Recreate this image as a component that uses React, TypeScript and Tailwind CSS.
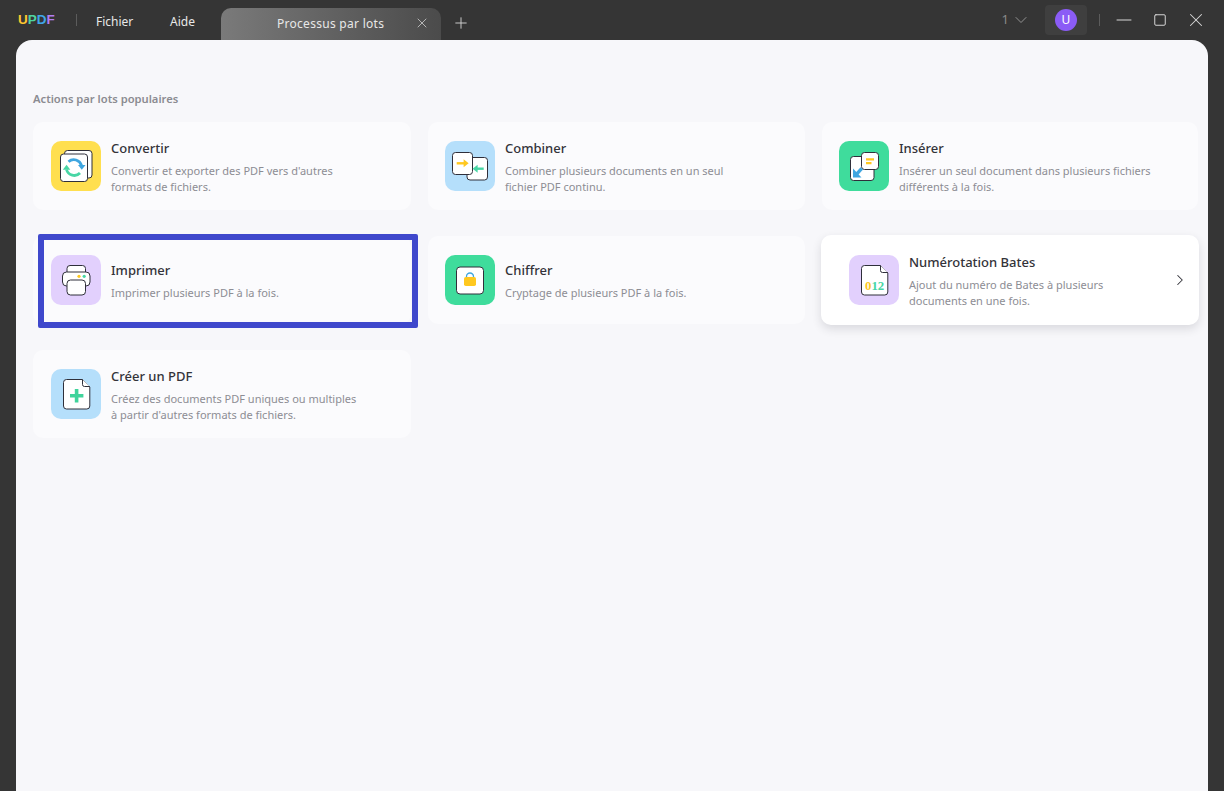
import { ChevronDown, ChevronRight, Minus, Plus, Square, X } from "lucide-react";
import type { ReactNode } from "react";

const ink = "#2f2f3a";

function Page({ x, y, w, h, fill = "#fff" }: { x: number; y: number; w: number; h: number; fill?: string }) {
  return <rect x={x} y={y} width={w} height={h} rx="3" fill={fill} stroke={ink} strokeWidth="1" />;
}

// page with the folded top right corner
function FoldedPage() {
  return (
    <>
      <path d="M15.5 10.5H31.5L38.8 18V37a3 3 0 0 1-3 3H15.5a3 3 0 0 1-3-3V13.5a3 3 0 0 1 3-3Z" fill="#fff" stroke={ink} />
      <path d="M31.5 10.5V15.5a2 2 0 0 0 2 2H38.8" fill="#fff" stroke={ink} />
    </>
  );
}

function IconBox({ bg, children }: { bg: string; children: ReactNode }) {
  return (
    <div className={`h-[50px] w-[50px] shrink-0 rounded-[10px] ${bg}`}>
      <svg width="50" height="50" viewBox="0 0 50 50" fill="none">{children}</svg>
    </div>
  );
}

const ConvertIcon = (
  <IconBox bg="bg-[#ffdf4f]">
    <Page x={13.5} y={9.5} w={27.5} h={27.5} />
    <Page x={9.5} y={13} w={27} h={27.5} />
    <path d="M30.5 24.5a8 8 0 0 0-13-3.8" stroke="#3fa6e0" strokeWidth="2.8" />
    <path d="M27 24h7.5l-3.7 4.8Z" fill="#3fa6e0" />
    <path d="M15.5 28.5a8 8 0 0 0 13.5 3.5" stroke="#48d6a5" strokeWidth="2.8" />
    <path d="M11.8 28.8h7.5l-3.7-5Z" fill="#48d6a5" />
  </IconBox>
);

const CombineIcon = (
  <IconBox bg="bg-[#b5dffb]">
    <Page x={22} y={16.5} w={20.5} h={22.5} />
    <Page x={7.5} y={11.5} w={20} h={22} />
    <path d="M11.7 22.3h8" stroke="#ffc81f" strokeWidth="2.4" />
    <path d="M18.6 18.3l5 4-5 4Z" fill="#ffc81f" />
    <path d="M31 27.7h7.7" stroke="#48d6a5" strokeWidth="2.4" />
    <path d="M32.6 23.7l-5 4 5 4Z" fill="#48d6a5" />
  </IconBox>
);

const InsertIcon = (
  <IconBox bg="bg-[#3fdc9c]">
    <Page x={11.5} y={15.5} w={23.5} h={24} />
    <Page x={22.5} y={11.5} w={17} h={17} />
    <path d="M27 18.3h8M27 22.2h5.5" stroke="#ffc81f" strokeWidth="2.2" />
    <path d="M22.8 27.3l-5.4 6" stroke="#3fa6e0" strokeWidth="3.4" />
    <path d="M14 27.5v9h8.5Z" fill="#3fa6e0" />
  </IconBox>
);

const PrintIcon = (
  <IconBox bg="bg-[#e2d0fd]">
    <Page x={16} y={10.5} w={18.5} h={10} />
    <rect x="11.5" y="17" width="27.5" height="14" rx="4" fill="#fff" stroke={ink} />
    <rect x="16" y="25" width="18.5" height="15" rx="3.5" fill="#fff" stroke={ink} />
    <circle cx="28" cy="21.3" r="1.6" fill="#ffc81f" />
    <circle cx="33.2" cy="21.3" r="1.6" fill="#48d6a5" />
  </IconBox>
);

const LockIcon = (
  <IconBox bg="bg-[#3fdc9c]">
    <rect x="11.5" y="12" width="27" height="27" rx="3.5" fill="#fff" stroke={ink} />
    <path d="M21.5 22.5v-1a3.5 3.5 0 0 1 7 0v1" stroke="#3fa6e0" strokeWidth="1.3" />
    <rect x="19" y="22" width="12" height="9" rx="1.8" fill="#ffc81f" />
  </IconBox>
);

const BatesIcon = (
  <IconBox bg="bg-[#e2d0fd]">
    <FoldedPage />
    <text x="16" y="35" fontFamily="'Liberation Serif', serif" fontWeight="700" fontSize="12.8">
      <tspan fill="#ffc81f">0</tspan>
      <tspan fill="#48d6a5">12</tspan>
    </text>
  </IconBox>
);

const CreateIcon = (
  <IconBox bg="bg-[#b5dffb]">
    <FoldedPage />
    <path d="M25.6 20v13.4M19 26.7h13.4" stroke="#3fd39b" strokeWidth="3.6" />
  </IconBox>
);

function CardText({ title, desc }: { title: string; desc: ReactNode }) {
  return (
    <div>
      <div className="text-[13px] font-medium leading-[20px] text-[#333339]">{title}</div>
      <div className="mt-[5px] text-[11px] leading-[16px] text-[#8d8d94]">{desc}</div>
    </div>
  );
}

function Card({ icon, title, desc, pad = "pl-[18px]" }: { icon: ReactNode; title: string; desc: ReactNode; pad?: string }) {
  return (
    <div className={`flex h-[88px] items-center gap-[10px] rounded-[10px] bg-[#fbfbfd] ${pad}`}>
      {icon}
      <CardText title={title} desc={desc} />
    </div>
  );
}

export default function App() {
  return (
    <div className="flex h-screen flex-col overflow-hidden bg-[#353535] font-['Noto_Sans',sans-serif]">
      {/* title bar */}
      <div className="flex h-[40px] shrink-0 items-center text-[12px] text-[#e8e8e8]">
        <div className="ml-[18px] w-[38px] pb-[1px] font-['Liberation_Sans',sans-serif] text-[13.5px] font-bold leading-none">
          <span className="text-[#fdc72f]">U</span>
          <span className="text-[#4fd3a0]">P</span>
          <span className="text-[#3fa6e8]">D</span>
          <span className="text-[#b27df2]">F</span>
        </div>
        <div className="ml-[20px] mt-[-1px] h-[12px] w-px bg-[#5c5c5c]" />
        <div className="ml-[19px] mt-[3px] w-[37px]">Fichier</div>
        <div className="ml-[37px] mt-[3px] w-[26px]">Aide</div>
        <div className="ml-[25px] mt-[8px] flex h-[32px] w-[220px] items-center rounded-t-[10px] bg-gradient-to-r from-[#7a7a7a] to-[#4b4b4b] pl-[56px] text-[12px] tracking-[0.28px]">
          <span className="w-[107px] whitespace-nowrap">Processus par lots</span>
          <X className="ml-[30px] -mt-[2px] text-[#cfcfcf]" size={16} strokeWidth={1.2} />
        </div>
        <Plus className="ml-[11px] mt-[6px] text-[#d8d8d8]" size={18} strokeWidth={1.2} />
        <div className="ml-auto flex items-center">
          <span className="text-[13px] text-[#8a8a8a]">1</span>
          <ChevronDown className="ml-[2px] text-[#9a9a9a]" size={20} strokeWidth={1.1} />
          <div className="ml-[14px] flex h-[30px] w-[42px] items-center justify-center rounded-[4px] bg-[#3f3f3f]">
            <div className="flex h-[22px] w-[22px] items-center justify-center rounded-full bg-[#8b5cf6] text-[12px] text-white">U</div>
          </div>
          <div className="ml-[12px] h-[12px] w-px bg-[#5c5c5c]" />
          <Minus className="ml-[12px] text-[#d8d8d8]" size={24} strokeWidth={1} />
          <Square className="ml-[17px] text-[#d8d8d8]" size={14} strokeWidth={1.7} />
          <X className="ml-[18px] mr-[17px] text-[#d8d8d8]" size={22} strokeWidth={1.1} />
        </div>
      </div>

      {/* main panel */}
      <div className="ml-[16px] mr-[16px] flex-1 rounded-t-[16px] bg-[#f7f7fa] pl-[17px] pt-[50px]">
        <div className="text-[11.2px] font-semibold leading-[18px] text-[#8b8b91]">Actions par lots populaires</div>
        <div className="mt-[14px] grid grid-cols-[378px_377px_376px] gap-x-[17px] gap-y-[26px]">
          <Card icon={ConvertIcon} title="Convertir" desc={<>Convertir et exporter des PDF vers d'autres<br />formats de fichiers.</>} />
          <Card icon={CombineIcon} pad="pl-[17px]" title="Combiner" desc={<>Combiner plusieurs documents en un seul<br />fichier PDF continu.</>} />
          <Card icon={InsertIcon} pad="pl-[17px]" title="Insérer" desc={<>Insérer un seul document dans plusieurs fichiers<br />différents à la fois.</>} />

          <div className="relative">
            <Card icon={PrintIcon} title="Imprimer" desc="Imprimer plusieurs PDF à la fois." />
            <div className="absolute -bottom-[4px] -right-[7px] -top-[2px] left-[5px] rounded-[2px] border-[6px] border-[#3f48cc]" />
          </div>
          <Card icon={LockIcon} pad="pl-[17px]" title="Chiffrer" desc="Cryptage de plusieurs PDF à la fois." />
          {/* hovered card */}
          <div className="-m-px flex h-[90px] items-center gap-[10px] rounded-[10px] bg-white pl-[28px] pr-[10px] shadow-[0_4px_10px_rgba(40,40,60,0.14)]">
            {BatesIcon}
            <CardText title="Numérotation Bates" desc={<>Ajout du numéro de Bates à plusieurs<br />documents en une fois.</>} />
            <ChevronRight className="ml-auto text-[#33333a]" size={18} strokeWidth={1.4} />
          </div>

          <Card icon={CreateIcon} title="Créer un PDF" desc={<>Créez des documents PDF uniques ou multiples<br />à partir d'autres formats de fichiers.</>} />
        </div>
      </div>
    </div>
  );
}
